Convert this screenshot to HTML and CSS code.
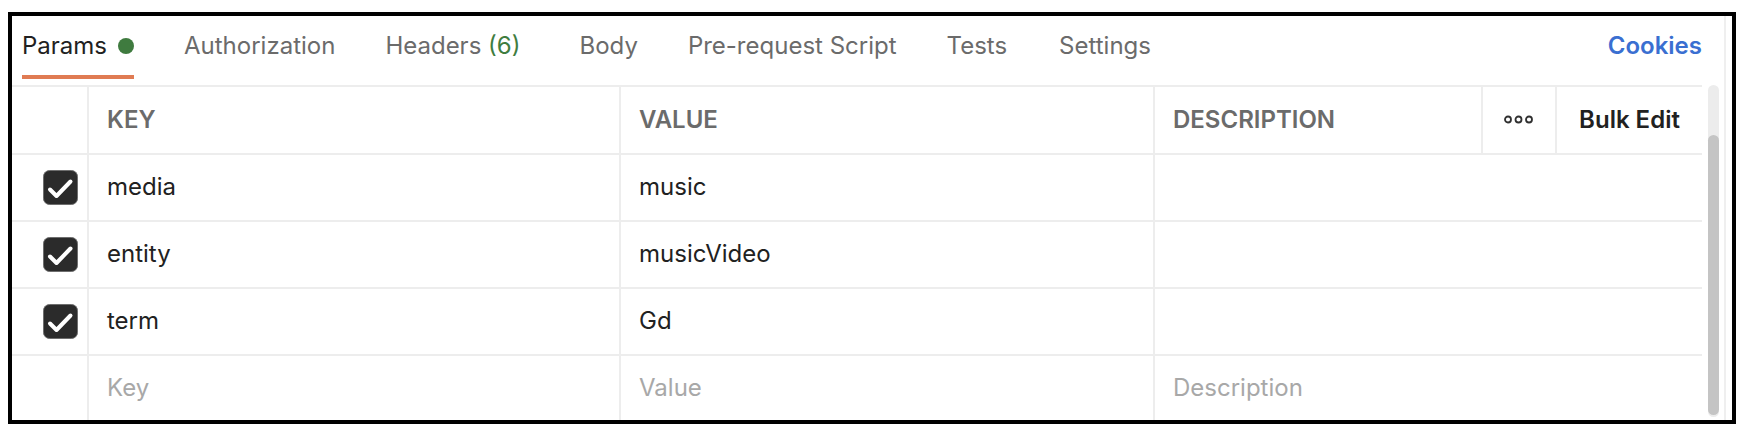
FILE: index.html
```html
<!DOCTYPE html>
<html>
<head>
<meta charset="utf-8">
<link rel="stylesheet" href="styles.css">
</head>
<body>
<div class="frame">
  <div class="main">
    <div class="tabs">
      <div class="tab active">Params<span class="dot"></span></div>
      <div class="tab">Authorization</div>
      <div class="tab headers"><span>Headers <span class="count">(6)</span></span></div>
      <div class="tab">Body</div>
      <div class="tab">Pre-request Script</div>
      <div class="tab">Tests</div>
      <div class="tab settings">Settings</div>
      <div class="spacer"></div>
      <div class="cookies">Cookies</div>
    </div>
    <div class="body">
      <div class="table">
        <div class="row head">
          <div class="cell check"></div>
          <div class="cell key">KEY</div>
          <div class="cell value">VALUE</div>
          <div class="cell desc-h">DESCRIPTION</div>
          <div class="cell more">
            <svg width="30" height="9" viewBox="0 0 30 9"><circle cx="4" cy="4.5" r="3" fill="none" stroke="#303030" stroke-width="1.8"/><circle cx="14.5" cy="4.5" r="3" fill="none" stroke="#303030" stroke-width="1.8"/><circle cx="25" cy="4.5" r="3" fill="none" stroke="#303030" stroke-width="1.8"/></svg>
          </div>
          <div class="cell bulk">Bulk Edit</div>
        </div>
        <div class="row">
          <div class="cell check"><svg class="cb" width="35" height="35" viewBox="0 0 35 35"><rect x="0.5" y="0.5" width="34" height="34" rx="6" fill="#2b2b2b" stroke="#6e6e6e" stroke-width="1"/><polyline points="7,19.5 13.5,26 27.5,11.5" fill="none" stroke="#fff" stroke-width="4" stroke-linecap="round" stroke-linejoin="round"/></svg></div>
          <div class="cell key">media</div>
          <div class="cell value">music</div>
          <div class="cell desc"></div>
        </div>
        <div class="row">
          <div class="cell check"><svg class="cb" width="35" height="35" viewBox="0 0 35 35"><rect x="0.5" y="0.5" width="34" height="34" rx="6" fill="#2b2b2b" stroke="#6e6e6e" stroke-width="1"/><polyline points="7,19.5 13.5,26 27.5,11.5" fill="none" stroke="#fff" stroke-width="4" stroke-linecap="round" stroke-linejoin="round"/></svg></div>
          <div class="cell key">entity</div>
          <div class="cell value">musicVideo</div>
          <div class="cell desc"></div>
        </div>
        <div class="row">
          <div class="cell check"><svg class="cb" width="35" height="35" viewBox="0 0 35 35"><rect x="0.5" y="0.5" width="34" height="34" rx="6" fill="#2b2b2b" stroke="#6e6e6e" stroke-width="1"/><polyline points="7,19.5 13.5,26 27.5,11.5" fill="none" stroke="#fff" stroke-width="4" stroke-linecap="round" stroke-linejoin="round"/></svg></div>
          <div class="cell key">term</div>
          <div class="cell value">Gd</div>
          <div class="cell desc"></div>
        </div>
        <div class="row last">
          <div class="cell check"></div>
          <div class="cell key ph">Key</div>
          <div class="cell value ph">Value</div>
          <div class="cell desc ph">Description</div>
        </div>
      </div>
      <div class="scroll"><div class="track"><div class="thumb"></div></div></div>
    </div>
  </div>
  <div class="edge"></div>
</div>
</body>
</html>
```
FILE: styles.css
```css
* { box-sizing: border-box; }
html, body { margin: 0; padding: 0; background: #fff; }
body { font-family: "Inter", "Liberation Sans", sans-serif; }

.frame {
  margin: 12px 0 0 8px;
  width: 1728px;
  height: 412px;
  border: 4px solid #000;
  display: flex;
}
.main { width: 1712px; display: flex; flex-direction: column; }
.edge { width: 8px; border-left: 2px solid #efefef; }

.tabs {
  height: 69px;
  display: flex;
  align-items: flex-start;
  padding: 0 22px 0 10px;
  gap: 50px;
  font-size: 24px;
  color: #6b6b6b;
}
.tab {
  height: 63px;
  display: flex;
  align-items: center;
  border-bottom: 4px solid transparent;
  white-space: nowrap;
}
.tab.active { color: #212121; border-bottom-color: #e07b53; }
.dot { width: 16px; height: 16px; border-radius: 50%; background: #3f7b3f; margin-left: 11px; }
.count { color: #3f7d3f; }
.headers { margin-right: 9px; }
.settings { margin-left: 2px; }
.spacer { flex: 1; }
.cookies { height: 59px; display: flex; align-items: center; color: #3a6fd1; font-weight: 600; }

.body { flex: 1; display: flex; }
.table { width: 1690px; display: flex; flex-direction: column; }
.row {
  display: grid;
  grid-template-columns: 75px 532px 534px 549px;
  height: 67px;
  border-top: 2px solid #ededed;
  font-size: 24px;
  color: #212121;
}
.row.head { grid-template-columns: 75px 532px 534px 328px 74px 147px; height: 68px; }
.row.last { flex: 1; height: auto; }
.cell { display: flex; align-items: center; padding-left: 18px; padding-bottom: 2px; border-left: 2px solid #ededed; white-space: nowrap; }
.cell.check { border-left: none; padding-left: 31px; padding-bottom: 0; }
.head .cell { color: #6b6b6b; font-weight: 600; }
.head .more { padding-left: 0; justify-content: center; }
.head .bulk { padding-left: 0; justify-content: center; color: #212121; }
.ph { color: #a8a8a8; }

.scroll { width: 22px; padding-left: 6px; display: flex; }
.track { width: 11px; margin-bottom: 3px; background: #ececec; border-radius: 6px; display: flex; flex-direction: column; justify-content: flex-end; padding-bottom: 2px; }
.thumb { height: 280px; background: #c4c4c4; border-radius: 6px; }
```
